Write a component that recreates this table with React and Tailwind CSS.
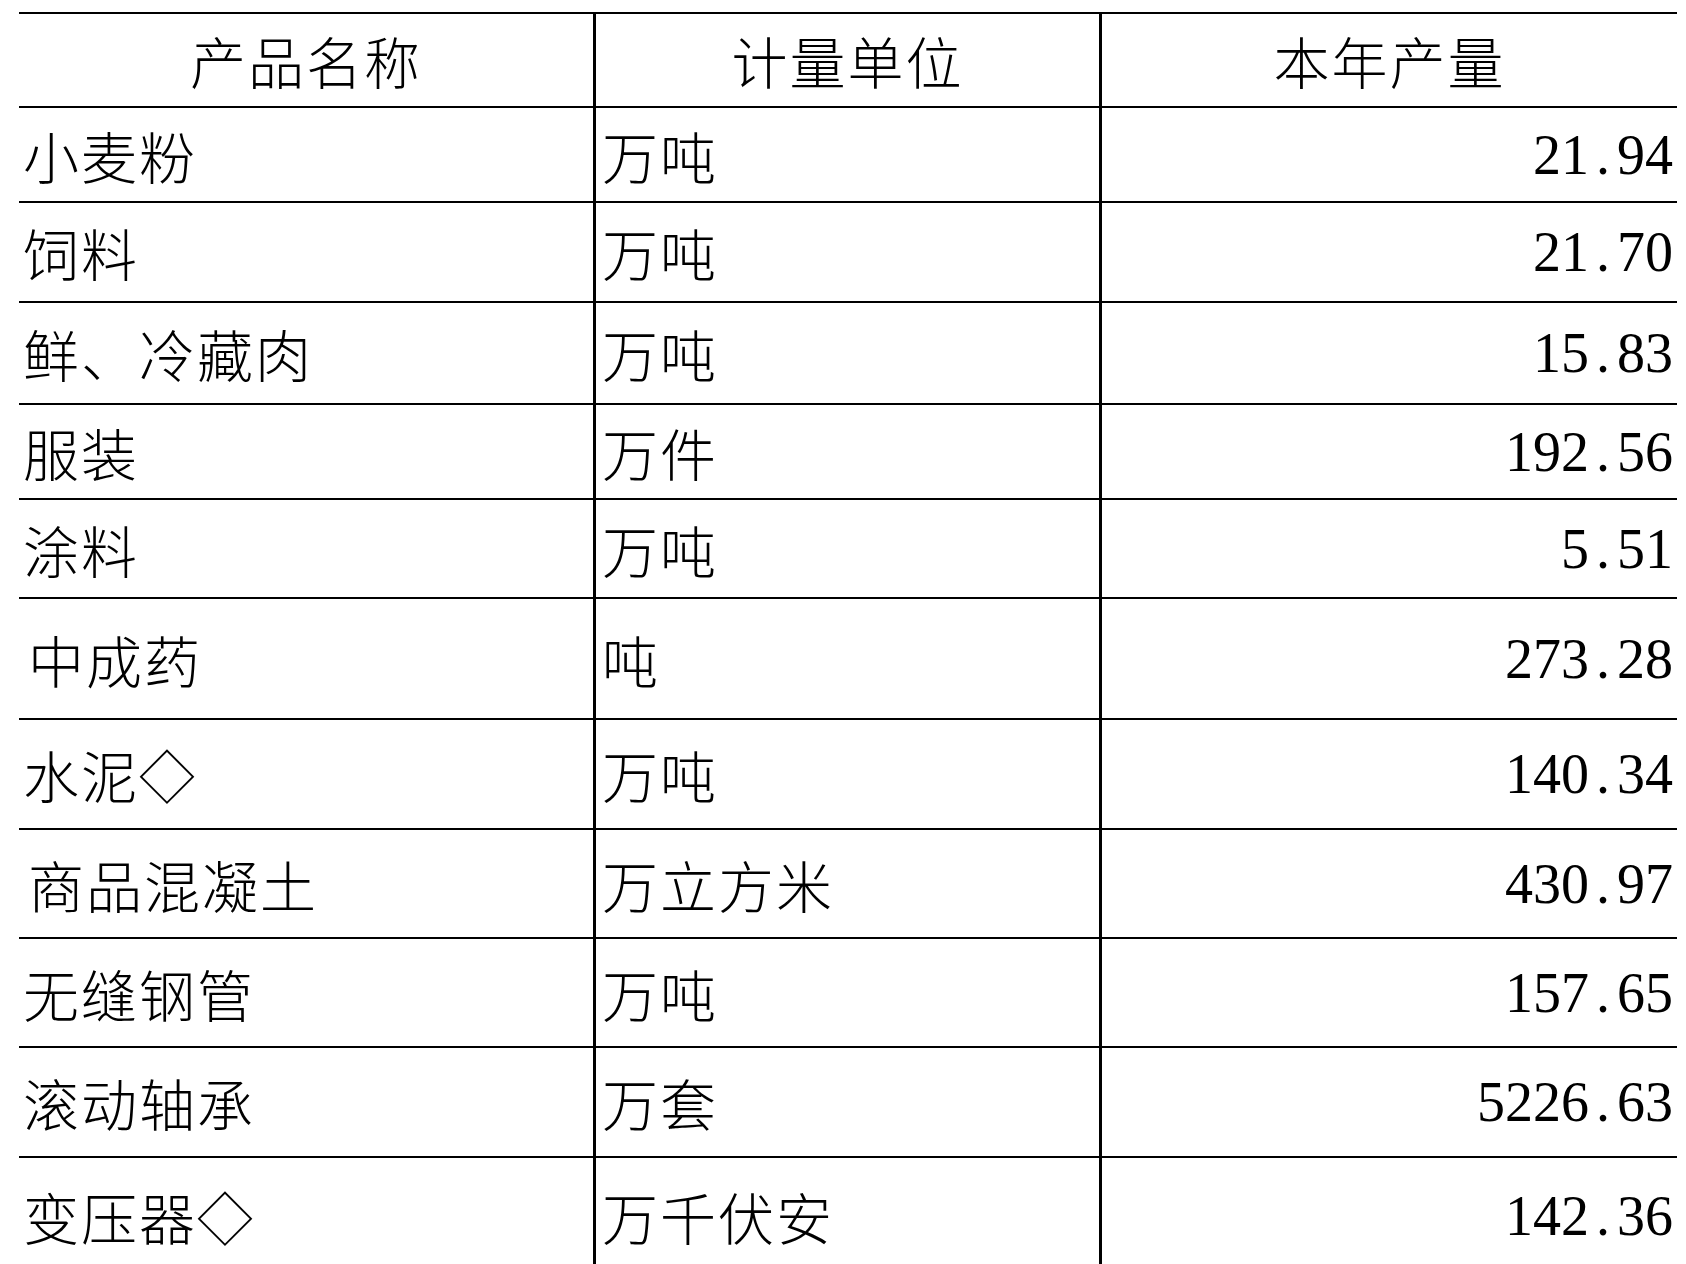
const rows = [
  { name: "小麦粉", unit: "万吨", value: "21.94", h: "h-[95px]" },
  { name: "饲料", unit: "万吨", value: "21.70", h: "h-[100px]" },
  { name: "鲜、冷藏肉", unit: "万吨", value: "15.83", h: "h-[102px]" },
  { name: "服装", unit: "万件", value: "192.56", h: "h-[95px]" },
  { name: "涂料", unit: "万吨", value: "5.51", h: "h-[99px]" },
  { name: "中成药", unit: "吨", value: "273.28", h: "h-[121px]", pad: "pl-[9px]" },
  { name: "水泥◇", unit: "万吨", value: "140.34", h: "h-[110px]" },
  { name: "商品混凝土", unit: "万立方米", value: "430.97", h: "h-[109px]", pad: "pl-[9px]" },
  { name: "无缝钢管", unit: "万吨", value: "157.65", h: "h-[109px]" },
  { name: "滚动轴承", unit: "万套", value: "5226.63", h: "h-[110px]" },
  { name: "变压器◇", unit: "万千伏安", value: "142.36", h: "h-[118px]" },
]

const cjk = "font-['Noto_Sans_CJK_SC',sans-serif]"

function Num({ value }) {
  const [a, b] = value.split(".")
  return (
    <span className="font-['Liberation_Serif',serif] text-[56px] leading-none">
      {a}
      <span className="inline-block w-[28px] text-center">.</span>
      {b}
    </span>
  )
}

export default function App() {
  return (
    <main className="h-screen w-full overflow-hidden bg-white text-black">
      <div className="pt-[12px] pl-[19px]">
        <div className="w-[1658px]">
          <div className="grid grid-cols-[574px_506px_578px] h-[94px] border-t-2 border-black">
            <div className={`flex items-center justify-center ${cjk} text-[56px] tracking-[2px] font-light`}>
              产品名称
            </div>
            <div className={`flex items-center justify-center border-l-[3px] border-black ${cjk} text-[56px] tracking-[2px] font-light`}>
              计量单位
            </div>
            <div className={`flex items-center justify-center border-l-[3px] border-black ${cjk} text-[56px] tracking-[2px] font-light`}>
              本年产量
            </div>
          </div>
          {rows.map((r, i) => (
            <div
              key={i}
              className={`grid grid-cols-[574px_506px_578px] ${r.h} border-t-2 border-black`}
            >
              <div className={`flex items-center ${r.pad || "pl-[4px]"} ${cjk} text-[56px] tracking-[2px] font-light`}>
                {r.name}
              </div>
              <div className={`flex items-center pl-[6px] border-l-[3px] border-black ${cjk} text-[56px] tracking-[2px] font-light`}>
                {r.unit}
              </div>
              <div className="flex items-center justify-end pr-[4px] border-l-[3px] border-black">
                <Num value={r.value} />
              </div>
            </div>
          ))}
        </div>
      </div>
    </main>
  )
}
